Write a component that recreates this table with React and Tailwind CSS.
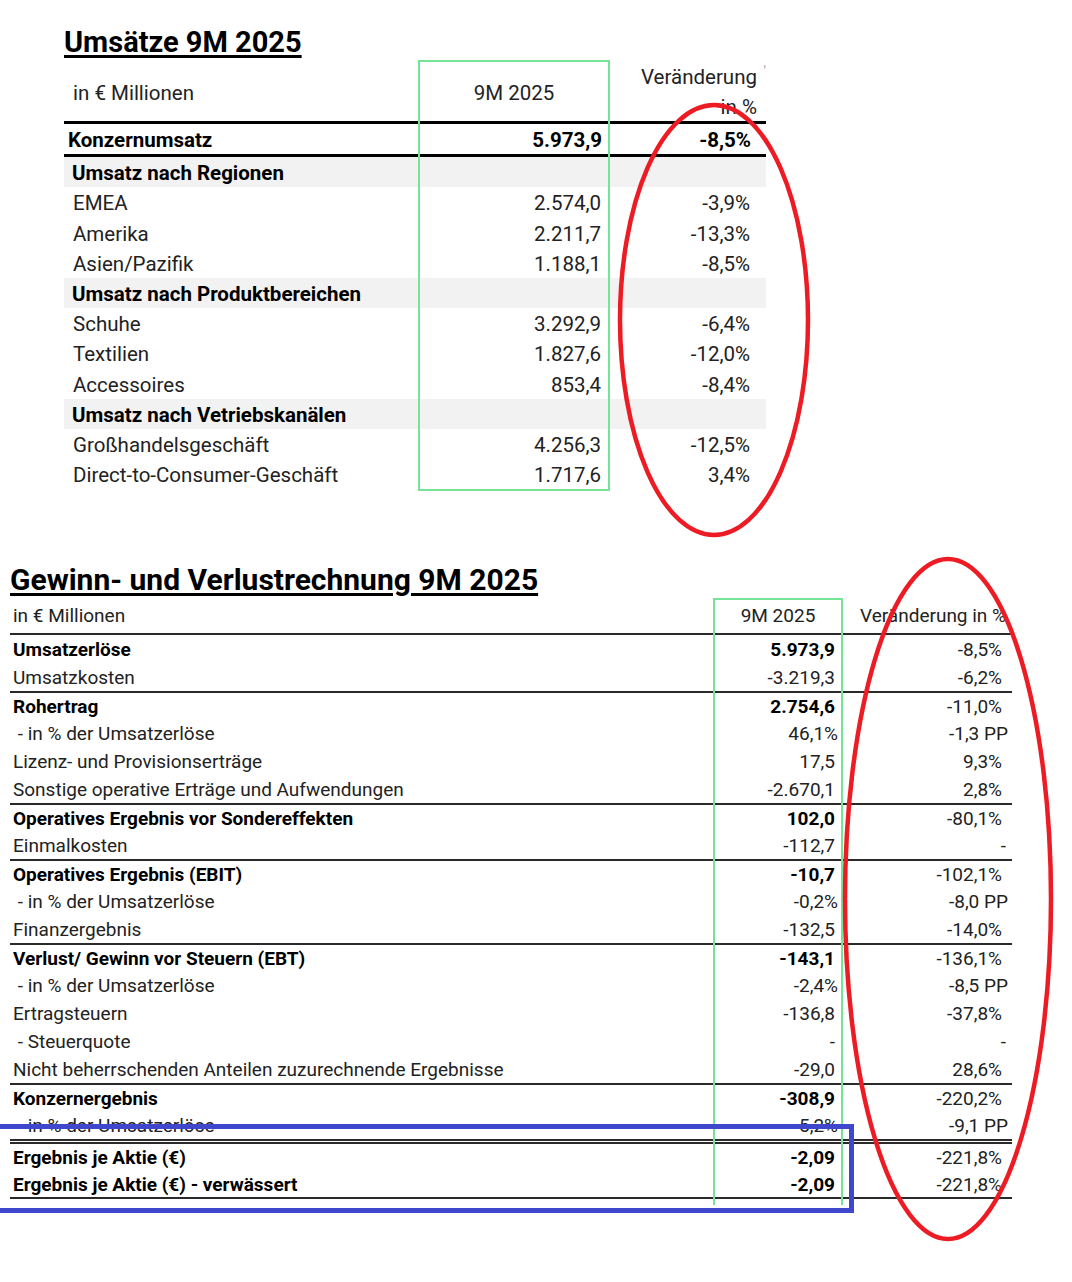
import React from "react";

const font = { fontFamily: "Roboto, 'Liberation Sans', sans-serif" };

const sales = [
  { type: "group", label: "Umsatz nach Regionen" },
  { label: "EMEA", v: "2.574,0", p: "-3,9%" },
  { label: "Amerika", v: "2.211,7", p: "-13,3%" },
  { label: "Asien/Pazifik", v: "1.188,1", p: "-8,5%" },
  { type: "group", label: "Umsatz nach Produktbereichen" },
  { label: "Schuhe", v: "3.292,9", p: "-6,4%" },
  { label: "Textilien", v: "1.827,6", p: "-12,0%" },
  { label: "Accessoires", v: "853,4", p: "-8,4%" },
  { type: "group", label: "Umsatz nach Vetriebskanälen" },
  { label: "Großhandelsgeschäft", v: "4.256,3", p: "-12,5%" },
  { label: "Direct-to-Consumer-Geschäft", v: "1.717,6", p: "3,4%" },
];

// line: "single" | "double"
const pnl = [
  { label: "Umsatzerlöse", v: "5.973,9", p: "-8,5%", bold: true },
  { label: "Umsatzkosten", v: "-3.219,3", p: "-6,2%" },
  { label: "Rohertrag", v: "2.754,6", p: "-11,0%", bold: true, line: "single" },
  { label: " - in % der Umsatzerlöse", v: "46,1%", p: "-1,3 PP" },
  { label: "Lizenz- und Provisionserträge", v: "17,5", p: "9,3%" },
  { label: "Sonstige operative Erträge und Aufwendungen", v: "-2.670,1", p: "2,8%" },
  { label: "Operatives Ergebnis vor Sondereffekten", v: "102,0", p: "-80,1%", bold: true, line: "single" },
  { label: "Einmalkosten", v: "-112,7", p: "-" },
  { label: "Operatives Ergebnis (EBIT)", v: "-10,7", p: "-102,1%", bold: true, line: "single" },
  { label: " - in % der Umsatzerlöse", v: "-0,2%", p: "-8,0 PP" },
  { label: "Finanzergebnis", v: "-132,5", p: "-14,0%" },
  { label: "Verlust/ Gewinn vor Steuern (EBT)", v: "-143,1", p: "-136,1%", bold: true, line: "single" },
  { label: " - in % der Umsatzerlöse", v: "-2,4%", p: "-8,5 PP" },
  { label: "Ertragsteuern", v: "-136,8", p: "-37,8%" },
  { label: " - Steuerquote", v: "-", p: "-" },
  { label: "Nicht beherrschenden Anteilen zuzurechnende Ergebnisse", v: "-29,0", p: "28,6%" },
  { label: "Konzernergebnis", v: "-308,9", p: "-220,2%", bold: true, line: "single" },
  { label: " - in % der Umsatzerlöse", v: "-5,2%", p: "-9,1 PP" },
  { label: "Ergebnis je Aktie (€)", v: "-2,09", p: "-221,8%", bold: true, line: "double" },
  { label: "Ergebnis je Aktie (€) - verwässert", v: "-2,09", p: "-221,8%", bold: true },
];

function valuePad(v) {
  return v.endsWith("%") ? "pr-[5px]" : "pr-[8px]";
}

function pctPad(p) {
  if (p.endsWith("PP")) return "pr-[4px]";
  if (p === "-") return "pr-[6px]";
  return "pr-[10px]";
}

function SalesTable() {
  return (
    <section className="ml-[64px] w-[702px] pt-[26px] text-[20.5px] text-[#222]">
      <h2 className="text-[29px] leading-[32px] font-bold text-black underline decoration-[2.5px] underline-offset-[3px]">
        Umsätze 9M 2025
      </h2>

      {/* header */}
      <div className="mt-[2px] flex h-[61px] items-center">
        <div className="w-[354px] pl-[9px] pt-[5px]">in € Millionen</div>
        <div className="w-[192px] pt-[5px] text-center">9M 2025</div>
        <div className="relative w-[156px] pr-[9px] pt-[3px] text-right leading-[30px]">
          <div>Veränderung</div>
          <div>in %</div>
          <span className="absolute right-0 top-[-3px] text-[14px] text-gray-400">'</span>
        </div>
      </div>

      {/* Konzernumsatz */}
      <div className="flex h-[36px] items-center border-y-[3px] border-black pt-[3px] font-bold text-black">
        <div className="w-[354px] pl-[4px]">Konzernumsatz</div>
        <div className="w-[192px] pr-[8px] text-right">5.973,9</div>
        <div className="w-[156px] pr-[15px] text-right">-8,5%</div>
      </div>

      {sales.map((row, i) =>
        row.type === "group" ? (
          <div key={i} className="flex h-[30.2px] items-center bg-[#f2f2f2] pt-[3px] font-bold text-black">
            <div className="pl-[8px]">{row.label}</div>
          </div>
        ) : (
          <div key={i} className="flex h-[30.2px] items-center pt-[3px]">
            <div className="w-[354px] pl-[9px]">{row.label}</div>
            <div className="w-[192px] pr-[9px] text-right">{row.v}</div>
            <div className="w-[156px] pr-[16px] text-right">{row.p}</div>
          </div>
        )
      )}
    </section>
  );
}

function PnlTable() {
  return (
    <section className="ml-[10px] mt-[75px] w-[1002px] text-[19px] text-[#222]">
      <h2 className="text-[30px] leading-[32px] font-bold text-black underline decoration-[2.5px] underline-offset-[3px]">
        Gewinn- und Verlustrechnung 9M 2025
      </h2>

      <div className="mt-[2px] flex h-[37px] items-center border-b-2 border-[#2a2a2a] pt-[2px]">
        <div className="w-[703px] pl-[3px]">in € Millionen</div>
        <div className="w-[130px] text-center">9M 2025</div>
        <div className="w-[169px] pr-[6px] text-right">Veränderung in %</div>
      </div>

      {pnl.map((row, i) => (
        <div
          key={i}
          className={
            "flex items-center pt-[2px] " +
            (row.line === "double"
              ? "h-[32px] border-t-[5px] border-double border-[#2a2a2a]"
              : row.line === "single"
              ? "h-[28px] border-t-2 border-[#2a2a2a]"
              : "h-[28px]") +
            (i === pnl.length - 1 ? " border-b-2 border-[#2a2a2a]" : "")
          }
        >
          <div className={"w-[703px] whitespace-pre pl-[3px] " + (row.bold ? "font-bold text-black" : "")}>
            {row.label}
          </div>
          <div className={"w-[130px] text-right " + valuePad(row.v) + (row.bold ? " font-bold text-black" : "")}>
            {row.v}
          </div>
          <div className={"w-[169px] text-right " + pctPad(row.p)}>{row.p}</div>
        </div>
      ))}
    </section>
  );
}

// hand-drawn markup over the tables
function Annotations() {
  return (
    <svg className="pointer-events-none absolute left-0 top-0" width="1072" height="1282">
      <rect x="419" y="61" width="190" height="429" fill="none" stroke="#74e496" strokeWidth="2" />
      <path d="M714 1205 V599 H842 V1205" fill="none" stroke="#74e496" strokeWidth="2" />
      <ellipse cx="714" cy="320" rx="94" ry="215" fill="none" stroke="#ed1c24" strokeWidth="4.5" />
      <ellipse cx="948" cy="899" rx="103" ry="340" fill="none" stroke="#ed1c24" strokeWidth="4.5" />
      <path d="M-5 1126.5 H851.5 V1210.5 H-5" fill="none" stroke="#3f48cc" strokeWidth="5" />
    </svg>
  );
}

export default function App() {
  return (
    <div className="relative h-[1282px] w-[1072px] overflow-hidden bg-white" style={font}>
      <SalesTable />
      <PnlTable />
      <Annotations />
    </div>
  );
}
